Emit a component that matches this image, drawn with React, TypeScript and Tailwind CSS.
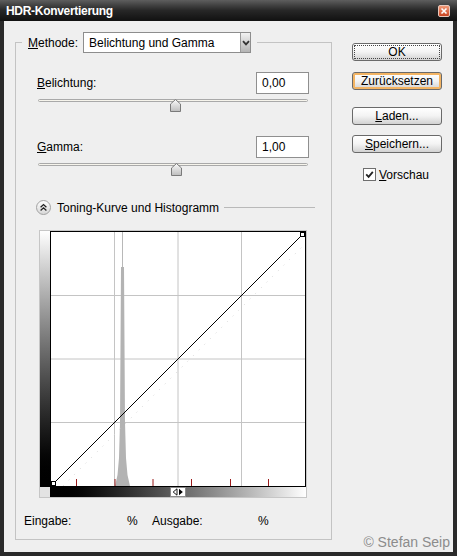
import React from 'react';

function Thumb({ id, className }: { id: string; className: string }) {
  return (
    <svg className={className} width="11" height="13" viewBox="0 0 11 13">
      <defs>
        <linearGradient id={id} x1="0" y1="0" x2="0" y2="1">
          <stop offset="0" stopColor="#fbfbfb" />
          <stop offset="1" stopColor="#bdbdbd" />
        </linearGradient>
      </defs>
      <polygon points="0.5,5 5.5,0.5 10.5,5 10.5,12.5 0.5,12.5" fill={`url(#${id})`} stroke="#7a7a7a" />
    </svg>
  );
}

function Track() {
  return <div className="mt-[5px] h-[3px] rounded-full border border-[#a9a9a9] bg-[#f6f4ec]" />;
}

function Chart() {
  const ticks = [25.5, 64, 102, 140.5, 179.5, 217.5];
  return (
    <svg width="254" height="254" viewBox="0 0 254 254" className="block">
      {/* grid */}
      {[63.5, 127, 190.5].map((v) => (
        <g key={v}>
          <line x1={v} y1="0" x2={v} y2="254" stroke="#c4c4c4" />
          <line x1="0" y1={v} x2="254" y2={v} stroke="#c4c4c4" />
        </g>
      ))}
      {/* histogram */}
      <line x1="71.5" y1="0" x2="71.5" y2="36" stroke="#b8b8b8" />
      <polygon
        points="70,35 73,35 73.5,112 74,190 75,226 76.5,243 79,254 64,254 66.5,243 68,226 69,190 69.5,112"
        fill="#b3b3b3"
      />
      {/* reference dots */}
      <line x1="12" y1="254" x2="254" y2="12" stroke="#dadada" strokeDasharray="1 7" />
      {/* curve */}
      <line x1="2" y1="252" x2="252" y2="2" stroke="#000" />
      <rect x="0.5" y="249.5" width="4" height="4" fill="#fff" stroke="#000" />
      <rect x="249.5" y="0.5" width="4" height="4" fill="#fff" stroke="#000" />
      {/* ticks */}
      {ticks.map((t) => (
        <line key={t} x1={t} y1="247" x2={t} y2="254" stroke="#9b1b1b" />
      ))}
    </svg>
  );
}

function Button({ children, variant }: { children: React.ReactNode; variant?: 'focus' | 'hover' }) {
  return (
    <div
      className={
        variant === 'focus'
          ? 'h-[18px] w-[90px] rounded-[3px] border border-[#6a6a6a] bg-linear-to-b from-white via-[#f3f3f3] to-[#d2d2d2] flex items-center justify-center leading-none outline-1 outline-dotted outline-[#444] -outline-offset-3'
          : variant === 'hover'
          ? 'h-[18px] w-[90px] rounded-[3px] border border-[#6a6a6a] bg-linear-to-b from-white via-[#f3f3f3] to-[#d2d2d2] flex items-center justify-center leading-none shadow-[inset_0_0_0_2px_#f3b463]'
          : 'h-[18px] w-[90px] rounded-[3px] border border-[#6a6a6a] bg-linear-to-b from-white via-[#f3f3f3] to-[#d2d2d2] flex items-center justify-center leading-none'
      }
    >
      {children}
    </div>
  );
}

export default function App() {
  return (
    <div className="w-[457px] h-[556px] flex flex-col bg-[#2a2a2a] font-['Liberation_Sans',Arial,sans-serif] text-[12px] text-black overflow-hidden">
      {/* Title bar */}
      <div className="h-[21px] flex items-center pl-[6px] pr-[7px] bg-linear-to-b from-[#5e5e5e] via-[#272727] to-[#111111]">
        <span className="flex-1 text-white font-bold text-[12px] tracking-[-0.3px]">HDR-Konvertierung</span>
        <div className="w-[12px] h-[12px] rounded-[2px] border border-[#e9c9bd] bg-linear-to-b from-[#f29a78] to-[#c9431e] flex items-center justify-center">
          <svg width="8" height="8" viewBox="0 0 8 8">
            <path d="M1.5 1.5 L6.5 6.5 M6.5 1.5 L1.5 6.5" stroke="#fff" strokeWidth="1.6" />
          </svg>
        </div>
      </div>

      {/* Body */}
      <div className="relative flex-1 mx-[4px] mb-[4px] bg-[#efefef] flex items-start pl-[11px] pt-[11px]">
        <fieldset className="w-[317px] h-[508px] min-w-0 border border-[#c3c3c3]">
          <legend className="ml-[6px] px-[6px]">
            <div className="flex items-center h-[21px]">
              <span>
                <u>M</u>ethode:
              </span>
              <div className="ml-[5px] w-[168px] h-[21px] bg-white border border-[#8d8d8d] flex items-center">
                <span className="flex-1 pl-[5px]">Belichtung und Gamma</span>
                <div className="w-[10px] h-full border-l border-[#9a9a9a] bg-linear-to-b from-[#f2f2f2] to-[#b4b4b4] flex items-center justify-center">
                  <svg width="8" height="6" viewBox="0 0 8 6">
                    <path d="M1 1.2 L4 4.4 L7 1.2" stroke="#333" strokeWidth="1.8" fill="none" />
                  </svg>
                </div>
              </div>
            </div>
          </legend>

          {/* Belichtung */}
          <div className="mt-[19px] pl-[21px] pr-[22px] h-[22px] flex items-center justify-between">
            <span>
              <u>B</u>elichtung:
            </span>
            <div className="w-[53px] h-[22px] bg-white border border-[#8f8f8f] flex items-center pl-[5px]">0,00</div>
          </div>
          <div className="relative mt-[2px] ml-[22px] mr-[23px] h-[14px]">
            <Track />
            <Thumb id="t1" className="absolute top-0 left-[132px]" />
          </div>

          {/* Gamma */}
          <div className="mt-[23px] pl-[21px] pr-[22px] h-[22px] flex items-center justify-between">
            <span>
              <u>G</u>amma:
            </span>
            <div className="w-[53px] h-[22px] bg-white border border-[#8f8f8f] flex items-center pl-[5px]">1,00</div>
          </div>
          <div className="relative mt-[1px] ml-[22px] mr-[23px] h-[14px]">
            <Track />
            <Thumb id="t2" className="absolute top-0 left-[133px]" />
          </div>

          {/* Toning */}
          <div className="mt-[23px] pl-[20px] pr-[16px] h-[15px] flex items-center">
            <svg width="15" height="15" viewBox="0 0 15 15">
              <defs>
                <linearGradient id="tg" x1="0" y1="0" x2="0" y2="1">
                  <stop offset="0" stopColor="#ffffff" />
                  <stop offset="1" stopColor="#d6d6d6" />
                </linearGradient>
              </defs>
              <circle cx="7.5" cy="7.5" r="7" fill="url(#tg)" stroke="#a2a2a2" />
              <path d="M4.6 7.2 L7.5 4.6 L10.4 7.2 M4.6 10.4 L7.5 7.8 L10.4 10.4" stroke="#222" strokeWidth="1.3" fill="none" />
            </svg>
            <span className="ml-[6px]">Toning-Kurve und Histogramm</span>
            <div className="ml-[5px] flex-1 h-px bg-[#b9b9b9]" />
          </div>

          {/* Curve */}
          <div className="mt-[15px] ml-[23px] w-[268px] h-[268px] border border-[#c6c6c6] grid grid-cols-[10px_256px] grid-rows-[256px_10px]">
            <div className="bg-linear-to-b from-white to-black" />
            <div className="border border-black bg-white">
              <Chart />
            </div>
            <div className="bg-[#e3e3e3]" />
            <div className="bg-linear-to-r from-black to-white flex justify-center">
              <svg width="16" height="10" viewBox="0 0 16 10" className="block">
                <rect x="0.5" y="0.5" width="15" height="9" fill="#fff" stroke="#8a8a8a" />
                <path d="M7 1.8 L3.2 5 L7 8.2 Z" fill="#fff" stroke="#000" strokeWidth="0.9" />
                <path d="M9 1.8 L12.8 5 L9 8.2 Z" fill="#000" />
              </svg>
            </div>
          </div>

          {/* Eingabe / Ausgabe */}
          <div className="mt-[15px] pl-[8px] h-[16px] flex items-center">
            <span className="w-[103px]">Eingabe:</span>
            <span className="w-[25px]">%</span>
            <span className="w-[106px]">Ausgabe:</span>
            <span>%</span>
          </div>
        </fieldset>

        {/* Buttons */}
        <div className="ml-[20px] w-[90px] flex flex-col">
          <div className="mt-[11px]">
            <Button variant="focus">OK</Button>
          </div>
          <div className="mt-[11px]">
            <Button variant="hover">Zurücksetzen</Button>
          </div>
          <div className="mt-[17px]">
            <Button>
              <span>
                <u>L</u>aden...
              </span>
            </Button>
          </div>
          <div className="mt-[10px]">
            <Button>
              <span>
                <u>S</u>peichern...
              </span>
            </Button>
          </div>
          <div className="mt-[15px] ml-[11px] flex items-center h-[13px]">
            <div className="w-[13px] h-[13px] bg-white border border-[#6e6e6e] flex items-center justify-center">
              <svg width="9" height="9" viewBox="0 0 9 9">
                <path d="M1.2 4.4 L3.6 6.8 L7.8 1.8" stroke="#222" strokeWidth="1.8" fill="none" />
              </svg>
            </div>
            <span className="ml-[3px]">
              <u>V</u>orschau
            </span>
          </div>
        </div>

        <span className="absolute right-[3px] bottom-[2px] text-[14px] leading-[16px] text-[#8c8c8c]">© Stefan Seip</span>
      </div>
    </div>
  );
}
